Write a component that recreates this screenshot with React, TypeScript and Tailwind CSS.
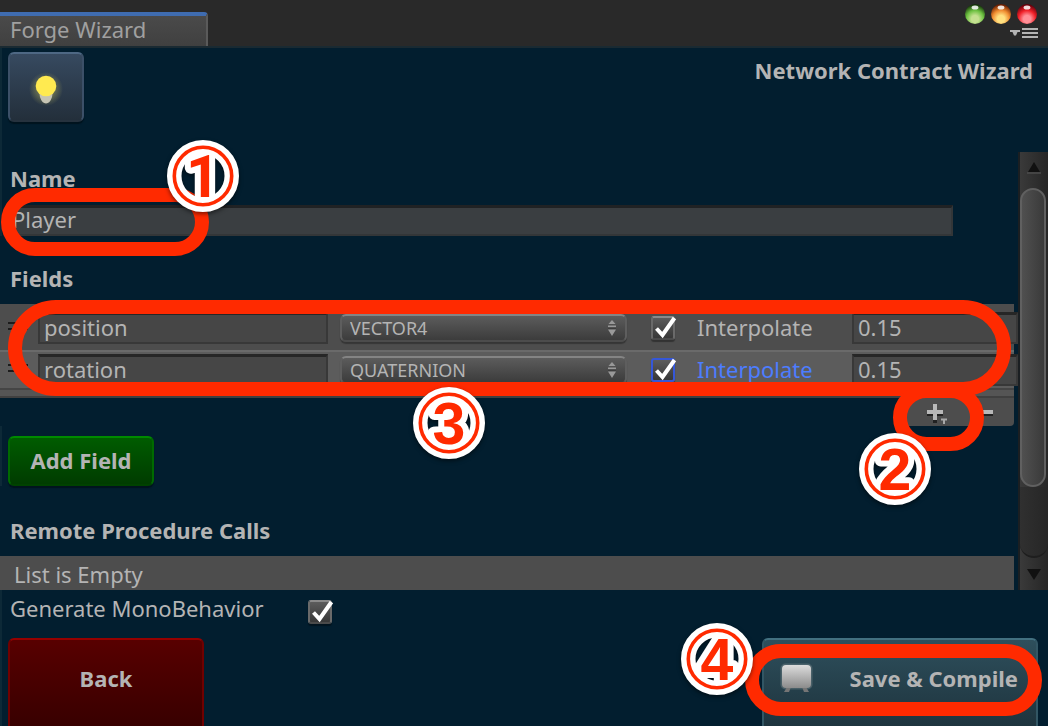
import { useState } from "react";
import type { ReactNode } from "react";

type FieldRow = { name: string; type: string; interpolate: boolean; value: string; focused?: boolean };

const FIELDS: FieldRow[] = [
  { name: "position", type: "VECTOR4", interpolate: true, value: "0.15" },
  { name: "rotation", type: "QUATERNION", interpolate: true, value: "0.15", focused: true },
];

const TYPES = ["VECTOR4", "QUATERNION", "VECTOR3", "FLOAT", "INT"];

function Marker({ digit, className }: { digit: string; className: string }) {
  return (
    <svg
      viewBox="0 0 72 72"
      aria-hidden="true"
      className={`pointer-events-none absolute z-20 size-[72px] drop-shadow-[0_2px_2px_rgba(0,0,0,0.5)] ${className}`}
    >
      <circle cx="36" cy="36" r="28.75" fill="none" stroke="#fff" strokeWidth="14.5" />
      <text
        x="36"
        y="56.5"
        textAnchor="middle"
        fontFamily={digit === "1" ? "Roboto, sans-serif" : "'Liberation Sans', Arial, sans-serif"}
        fontWeight="700"
        fontSize="59"
        fill="#ff2a00"
        stroke="#fff"
        strokeWidth="12"
        strokeLinejoin="round"
        paintOrder="stroke"
      >
        {digit}
      </text>
      <circle cx="36" cy="36" r="28.7" fill="none" stroke="#ff2a00" strokeWidth="3.6" />
    </svg>
  );
}

function Ring({ className }: { className: string }) {
  return (
    <div
      aria-hidden="true"
      className={`pointer-events-none absolute z-10 rounded-full border-[14px] border-[#ff2a00] ${className}`}
    />
  );
}

function Tick({ id, initial, focused }: { id: string; initial: boolean; focused?: boolean }) {
  const [on, setOn] = useState(initial);
  return (
    <span className="relative block size-6 shrink-0">
      <input
        id={id}
        type="checkbox"
        checked={on}
        onChange={(e) => setOn(e.target.checked)}
        className={`block size-6 appearance-none rounded-[3px] bg-linear-to-b from-[#5c5c5c] to-[#383838] shadow-[0_2px_1px_rgba(0,0,0,0.35)] ${
          focused ? "border-2 border-[#3557d8]" : "border-2 border-t-[#8a8a8a] border-x-[#6a6a6a] border-b-[#4a4a4a]"
        }`}
      />
      {on && (
        <svg viewBox="0 0 26 24" className="pointer-events-none absolute top-0 left-0 h-6 w-[26px]" aria-hidden="true">
          <path d="M5.5 12.5 L11.5 19 L23.5 2" fill="none" stroke="#fff" strokeWidth="4" />
        </svg>
      )}
    </span>
  );
}

function Orb({ label, rim, mid, low }: { label: string; rim: string; mid: string; low: string }) {
  const id = `orb-${label}`;
  return (
    <button type="button" aria-label={label} className="block size-5">
      <svg viewBox="0 0 20 20" className="size-5" aria-hidden="true">
        <defs>
          <radialGradient id={id} cx="50%" cy="75%" r="72%">
            <stop offset="0" stopColor={low} />
            <stop offset="0.25" stopColor={low} />
            <stop offset="0.6" stopColor={mid} />
            <stop offset="1" stopColor={rim} />
          </radialGradient>
        </defs>
        <circle cx="10" cy="10" r="10" fill={`url(#${id})`} />
        <ellipse cx="10" cy="3.4" rx="3.4" ry="2" fill="#fff" opacity="0.85" />
      </svg>
    </button>
  );
}

function Heading({ children, htmlFor }: { children: ReactNode; htmlFor?: string }) {
  const cls = "block text-[22px] leading-7 font-bold";
  return htmlFor ? (
    <label htmlFor={htmlFor} className={cls}>
      {children}
    </label>
  ) : (
    <h2 className={cls}>{children}</h2>
  );
}

const BOX =
  "h-8 border-2 border-t-[3px] border-[#383838] border-t-[#262626] bg-[#464646] pb-1 text-[22px] leading-6 text-[#b4b4b4] outline-none";

function Row({ field, index }: { field: FieldRow; index: number }) {
  return (
    <div
      className={`flex items-start pl-2 ${
        index === 0 ? "h-[46px] bg-[#4d4d4d] pt-2" : "h-[38px] border-t-2 border-[#6a6a6a] bg-[#5c5c5c] pt-0.5"
      }`}
    >
      <span className="mt-2.5 flex w-[30px] shrink-0 flex-col gap-1" aria-hidden="true">
        <span className="h-0.5 w-5 bg-[#1c1c1c]" />
        <span className="h-0.5 w-5 bg-[#1c1c1c]" />
      </span>
      <input aria-label="Field name" defaultValue={field.name} className={`${BOX} w-[290px] pl-1`} />
      <span className="relative ml-3 block w-[287px] shrink-0 pt-0.5">
        <select
          aria-label="Field type"
          defaultValue={field.type}
          className="block h-7 w-full appearance-none rounded-md border-2 border-t-[#848484] border-x-[#5e5e5e] border-b-[#4c4c4c] bg-linear-to-b from-[#5c5c5c] to-[#3c3c3c] pb-0.5 pl-2 text-lg leading-6 text-[#b4b4b4] shadow-[0_2px_1px_rgba(0,0,0,0.3)] outline-none"
        >
          {TYPES.map((t) => (
            <option key={t}>{t}</option>
          ))}
        </select>
        <svg viewBox="0 0 10 16" className="pointer-events-none absolute top-2 right-2.5 h-4 w-2.5" aria-hidden="true">
          <path d="M5 0 L8.5 4 H1.5 Z M1 5.5 H9 V7.5 H1 Z M1 9.5 H9 L5 16 Z" fill="#999" />
          <path d="M1 8 H9" stroke="#303030" />
        </svg>
      </span>
      <span className="mt-1 ml-6">
        <Tick id={`interp-${index}`} initial={field.interpolate} focused={field.focused} />
      </span>
      <label
        htmlFor={`interp-${index}`}
        className={`ml-[22px] w-[155px] text-[22px] leading-[30px] ${field.focused ? "text-[#4c7dff]" : ""}`}
      >
        Interpolate
      </label>
      <input aria-label="Interpolation value" defaultValue={field.value} className={`${BOX} -mr-1 min-w-0 flex-1 pl-1`} />
    </div>
  );
}

function ScrollBar() {
  return (
    <div className="flex w-[30px] shrink-0 flex-col border-l-2 border-[#1b1f22] bg-linear-to-r from-[#3a3a3a] to-[#262626]">
      <button type="button" aria-label="Scroll up" className="flex h-9 items-center justify-center pb-1">
        <svg viewBox="0 0 14 12" className="h-3 w-3.5" aria-hidden="true">
          <path d="M7 0 L13 10 H1 Z" fill="#111" />
          <path d="M0 11 H14" stroke="#4d4d4d" strokeWidth="1.5" />
        </svg>
      </button>
      <div className="mr-0.5 h-[299px] rounded-full border-2 border-[#606060] bg-linear-to-r from-[#505050] to-[#3a3a3a]" />
      <div className="flex-1 rounded-b-2xl border-b-2 border-[#1e1e1e] bg-linear-to-r from-[#303030] to-[#262626]" />
      <button type="button" aria-label="Scroll down" className="flex h-8 items-center justify-center">
        <svg viewBox="0 0 14 12" className="h-3 w-3.5" aria-hidden="true">
          <path d="M0 1 H14 L7 12 Z" fill="#111" />
        </svg>
      </button>
    </div>
  );
}

export default function App() {
  return (
    <div className="flex min-h-screen flex-col overflow-hidden bg-[#021e2f] font-['Noto_Sans','Lucida_Grande',sans-serif] text-[#b4b4b4]">
      <header className="flex h-12 items-start justify-between border-b-2 border-[#1a2a32] bg-[#292929]">
        <div className="mt-3 h-[34px] w-[208px] rounded-tr-sm border-t-4 border-r-2 border-t-[#3f6cb0] border-r-[#5a5a5a] bg-linear-to-b from-[#4a4a4a] to-[#404040] pl-2.5 text-[22px] leading-[26px] text-[#a0a0a0]">
          Forge Wizard
        </div>
        <div className="flex flex-col items-end gap-1 pt-1 pr-2.5">
          <div className="mr-px flex gap-1.5">
            <Orb label="Minimize" rim="#14300a" mid="#6cc040" low="#c4e090" />
            <Orb label="Maximize" rim="#6a1c00" mid="#f08c30" low="#ffe080" />
            <Orb label="Close" rim="#60000a" mid="#f02028" low="#ff9098" />
          </div>
          <button type="button" aria-label="Window menu" className="block">
            <svg viewBox="0 0 28 10" className="h-2.5 w-7" aria-hidden="true">
              <path d="M0 2 H10 V4 H7.5 L6 7.5 H4 L2.5 4 H0 Z" fill="#b4b4b4" />
              <path d="M12 1 H28 M12 5 H28 M12 9 H28" stroke="#b4b4b4" strokeWidth="2" />
            </svg>
          </button>
        </div>
      </header>

      <div className="flex h-[104px] items-start justify-between border-l-2 border-[#0d2937] pt-1 pr-[15px] pl-1.5">
        <button
          type="button"
          aria-label="Hints"
          className="flex h-[70px] w-[76px] items-center justify-center rounded-md border-2 border-t-[#4e6884] border-x-[#3c5068] border-b-[#26323e] bg-linear-to-b from-[#374a60] to-[#232f3b] shadow-[0_2px_1px_#01131e]"
        >
          <svg viewBox="0 0 36 40" className="h-10 w-9" aria-hidden="true">
            <defs>
              <radialGradient id="glow">
                <stop offset="0.4" stopColor="#d8d060" stopOpacity="0.4" />
                <stop offset="1" stopColor="#d8d060" stopOpacity="0" />
              </radialGradient>
            </defs>
            <circle cx="18" cy="22" r="17" fill="url(#glow)" />
            <path d="M11 24 H25 L24 30 Q22 36.5 18 36.5 Q14 36.5 12 30 Z" fill="#c6c4b4" />
            <circle cx="18" cy="19" r="10.3" fill="#ffea50" />
          </svg>
        </button>
        <h1 className="pt-1 text-[22px] leading-7 font-bold">Network Contract Wizard</h1>
      </div>

      <div className="flex">
        <main className="min-w-0 flex-1">
          <section className="relative border-l-2 border-[#0d2937] pt-3 pr-[65px] pl-2">
            <Heading htmlFor="contract-name">Name</Heading>
            <input
              id="contract-name"
              defaultValue="Player"
              className="mt-[13px] block h-[31px] w-full border-2 border-t-[3px] border-[#333638] border-t-[#202224] bg-[#3a3e41] pb-1 text-[22px] leading-6 text-[#b4b4b4] outline-none"
            />
            <Ring className="top-9 -left-px h-[68px] w-[208px]" />
            <Marker digit="1" className="-top-3 left-[165px]" />
          </section>

          <section className="relative pt-7">
            <div className="pb-3 pl-2.5">
              <Heading>Fields</Heading>
            </div>
            <div className="mr-1">
              {FIELDS.map((f, i) => (
                <Row key={f.name} field={f} index={i} />
              ))}
              <div className="h-2.5 border-t-2 border-b-2 border-t-[#454545] border-b-[#404040] bg-[#555555]" />
            </div>
            <div className="mr-1 ml-auto flex h-7 w-[112px] gap-[27px] rounded-b bg-[#4d4d4d] pt-1 pl-6">
              <button type="button" aria-label="Add" className="block">
                <svg viewBox="0 0 22 22" className="size-[22px]" aria-hidden="true">
                  <path d="M1 11 H17 M9 4 V20" stroke="#222" strokeWidth="4" />
                  <path d="M1 9 H17 M9 1 V17" stroke="#b8b8b8" strokeWidth="4" />
                  <path d="M15 15.5 H21 V17.5 H19 V21 H17 V17.5 H15 Z" fill="#a8a8a8" />
                </svg>
              </button>
              <button type="button" aria-label="Remove" className="block">
                <svg viewBox="0 0 22 22" className="size-[22px]" aria-hidden="true">
                  <path d="M3 11 H18" stroke="#222" strokeWidth="4" />
                  <path d="M3 9 H18" stroke="#b8b8b8" strokeWidth="4" />
                </svg>
              </button>
            </div>
            <Ring className="top-16 right-[7px] left-2 h-24" />
            <Ring className="top-[148px] right-[34px] h-[67px] w-[91px]" />
            <Marker digit="3" className="top-[151px] left-[413px]" />
            <Marker digit="2" className="top-[197px] right-[87px]" />
          </section>

          <section className="border-l-2 border-[#0d2937] pt-2.5 pl-1.5">
            <button
              type="button"
              className="block h-[50px] w-[146px] rounded-md border-2 border-t-[#008a00] border-x-[#006a00] border-b-[#004200] bg-linear-to-b from-[#005c00] to-[#003c00] pb-0.5 text-[22px] leading-7 font-bold shadow-[0_2px_1px_#01131e]"
            >
              Add Field
            </button>
          </section>

          <section className="pt-[30px]">
            <div className="pb-3 pl-2.5">
              <Heading>Remote Procedure Calls</Heading>
            </div>
            <p className="mr-1 h-[34px] bg-[#4d4d4d] pt-1 pl-3.5 text-[22px] leading-7">List is Empty</p>
          </section>
        </main>
        <ScrollBar />
      </div>

      <div className="flex h-12 items-start border-l-2 border-[#0d2937] pt-1 pl-2 text-[22px] leading-7">
        <label htmlFor="generate-mono" className="w-[298px]">
          Generate MonoBehavior
        </label>
        <span className="pt-1.5">
          <Tick id="generate-mono" initial />
        </span>
      </div>

      <footer className="relative flex flex-1 items-stretch justify-between border-l-2 border-[#0d2937] pr-2.5 pl-1.5">
        <button
          type="button"
          className="min-h-[88px] w-[196px] rounded-t-md border-x-2 border-t-2 border-t-[#960000] border-x-[#700000] bg-linear-to-b from-[#580000] to-[#380000] pb-2.5 text-[22px] leading-7 font-bold"
        >
          Back
        </button>
        <button
          type="button"
          className="flex min-h-[88px] w-[276px] items-center justify-between rounded-t-md border-x-2 border-t-2 border-t-[#427080] border-x-[#325664] bg-linear-to-b from-[#2e4f5c] to-[#1e343e] pr-[18px] pb-2.5 pl-4 text-[22px] leading-7 font-bold"
        >
          <svg viewBox="0 0 34 30" className="h-[30px] w-[34px]" aria-hidden="true">
            <defs>
              <linearGradient id="safe" x1="0" y1="0" x2="0" y2="1">
                <stop offset="0" stopColor="#dcdcdc" />
                <stop offset="1" stopColor="#8c8c8c" />
              </linearGradient>
              <filter id="soft" x="-20%" y="-20%" width="140%" height="140%">
                <feGaussianBlur stdDeviation="0.7" />
              </filter>
            </defs>
            <g filter="url(#soft)">
              <rect x="0.5" y="0.5" width="32" height="26" rx="5" fill="#8a9498" opacity="0.35" />
              <path d="M7 24 H11 L9 29 H4 Z M22 24 H26 L29 29 H24 Z" fill="#757575" />
              <rect x="2" y="2" width="29" height="23" rx="4" fill="url(#safe)" />
            </g>
          </svg>
          Save &amp; Compile
        </button>
        <Ring className="top-1.5 right-1.5 h-[72px] w-[297px]" />
        <Marker digit="4" className="-top-[15px] right-[295px]" />
      </footer>
    </div>
  );
}
